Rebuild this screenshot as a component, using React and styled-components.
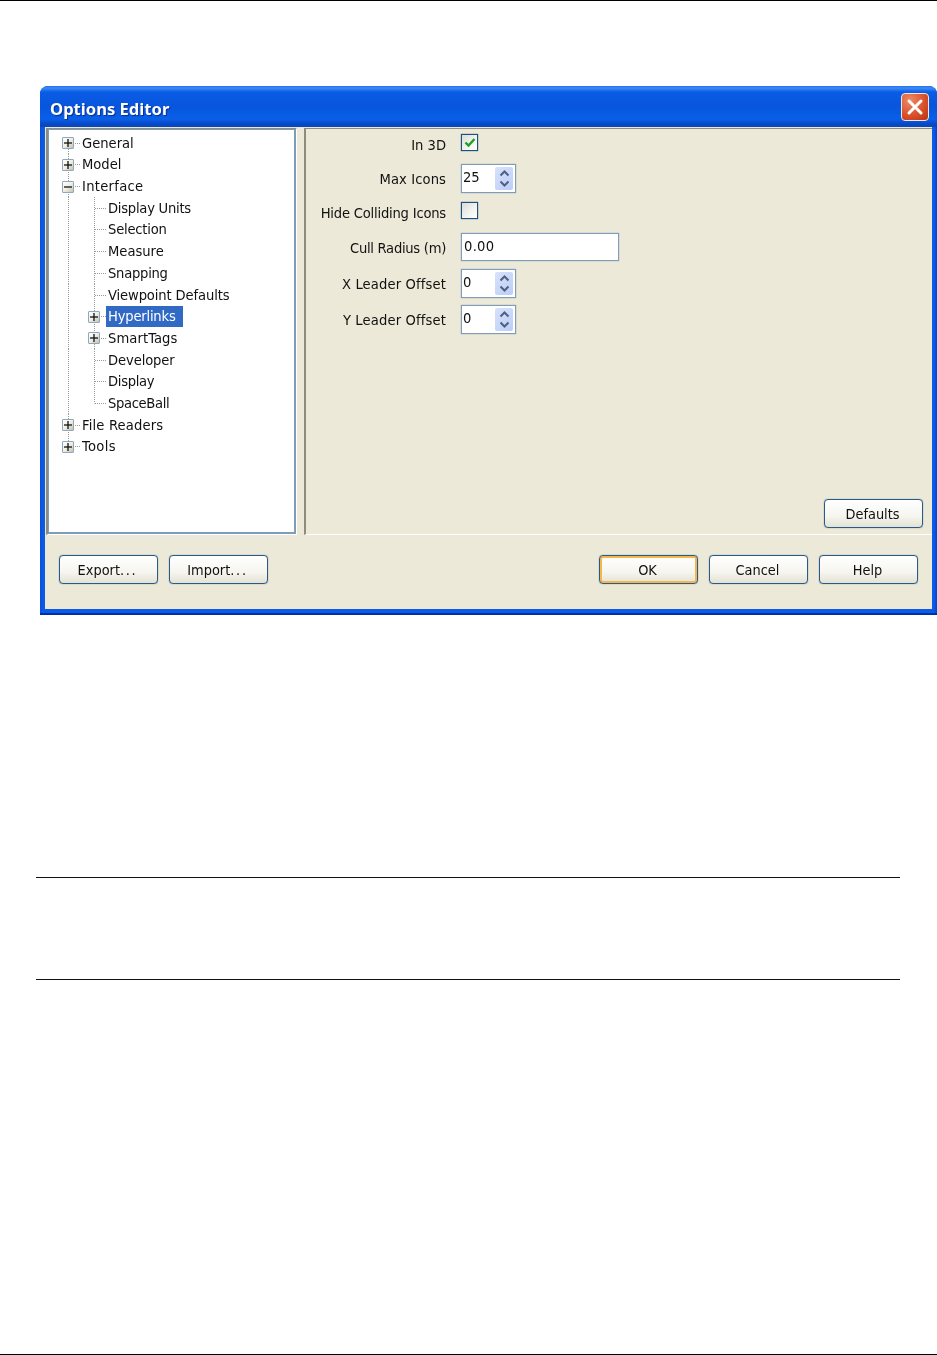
import React from "react";
import styled, { createGlobalStyle } from "styled-components";

const Global = createGlobalStyle`
  html, body { margin: 0; padding: 0; background: #fff; }
  body { width: 937px; height: 1355px; overflow: hidden; font-family: "DejaVu Sans Condensed", "DejaVu Sans", sans-serif; color: #111; }
`;

const Page = styled.div`
  width: 937px;
  height: 1355px;
  display: flex;
  flex-direction: column;
  box-sizing: border-box;
  border-top: 1px solid #000;
  border-bottom: 1px solid #000;
  overflow: hidden;
`;

const Dialog = styled.section`
  margin: 85px 0 0 40px;
  width: 897px;
  height: 529px;
  box-sizing: border-box;
  display: flex;
  flex-direction: column;
  flex: none;
  padding: 0 5px 6px 5px;
  border-radius: 8px 8px 0 0;
  background: linear-gradient(to right, #0a4fd8 0, #0a5be8 3px, #0a5be8 calc(100% - 3px), #0843c4 100%);
  box-shadow: inset 0 -2px 0 #0030a8;
  filter: blur(0.35px);
`;

const TitleBar = styled.header`
  height: 41px;
  margin: 0 -5px;
  padding: 0 8px 0 10px;
  flex: none;
  display: flex;
  align-items: center;
  justify-content: space-between;
  border-radius: 8px 8px 0 0;
  background: linear-gradient(to bottom, #1f6fee 0, #3f8cf6 2px, #0a5ce6 6px, #0855dd 20px, #0a5fe8 33px, #0649c8 38px, #0a45c0 41px);
`;

const Title = styled.h1`
  margin: 3px 0 0;
  font-family: "Noto Sans", sans-serif;
  font-size: 16.6px;
  font-weight: 700;
  color: #fff;
  text-shadow: 1px 1px 1px #0a2f8f;
`;

const CloseButton = styled.button`
  width: 28px;
  height: 28px;
  padding: 0;
  display: flex;
  align-items: center;
  justify-content: center;
  border: 1px solid #f4e6e0;
  border-radius: 4px;
  background: radial-gradient(circle at 30% 25%, #ee8a68 0, #d9522b 55%, #b8300f 100%);
`;

const Body = styled.div`
  flex: 1;
  display: flex;
  flex-direction: column;
  background: #ece9d8;
`;

const Split = styled.div`
  height: 408px;
  display: flex;
  flex: none;
`;

const TreePane = styled.div`
  width: 251px;
  box-sizing: border-box;
  margin-top: 1px;
  margin-left: 1px;
  border-left: 2px solid #8e8c7e;
  border-top: 1px solid #8e8c7e;
  border-right: 1px solid #fff;
  border-bottom: 1px solid #fff;
  background: #ece9d8;
  display: flex;
`;

const Tree = styled.ul`
  list-style: none;
  margin: 0;
  flex: 1;
  padding: 2.4px 0 0 6px;
  background: #fff;
  border: 1px solid #7f9db9;
  border-width: 1px 2px 2px 1px;
`;

const TreeRow = styled.li`
  height: 21.7px;
  display: flex;
  align-items: center;
  font-size: 14.6px;
`;

const dot = "repeating-linear-gradient(%DIR%, #9a9a9a 0 1px, transparent 1px 2px)";
const vert = dot.replace("%DIR%", "to bottom");
const horiz = dot.replace("%DIR%", "to right");

const backgrounds = {
  through: [`${vert} 13px 0 / 1px 100% no-repeat`],
  tee: [`${vert} 13px 0 / 1px 100% no-repeat`, `${horiz} 14px 50% / 12px 1px no-repeat`],
  end: [`${vert} 13px 0 / 1px 50% no-repeat`, `${horiz} 14px 50% / 12px 1px no-repeat`],
  start: [`${vert} 13px 100% / 1px 50% no-repeat`, `${horiz} 14px 50% / 12px 1px no-repeat`],
};

const Gutter = styled.span`
  width: 26px;
  height: 100%;
  flex: none;
  display: flex;
  align-items: center;
  background: ${(p) => backgrounds[p.$line].join(", ")};
`;

const Expander = styled.span`
  width: 12px;
  height: 12px;
  margin-left: 7px;
  box-sizing: border-box;
  display: flex;
  align-items: center;
  justify-content: center;
  border: 1px solid #8fa8c0;
  border-radius: 1px;
  background: linear-gradient(135deg, #fff 0, #eeeee4 50%, #c4c2b0 100%);
`;

const TreeLabel = styled.span`
  margin-left: -1px;
  height: 21px;
  line-height: 20px;
  white-space: nowrap;
  letter-spacing: ${(p) => p.$track || 0}px;
  color: ${(p) => (p.$selected ? "#fff" : "#111")};
  background: ${(p) => (p.$selected ? "#316ac5" : "transparent")};
  padding: 0 ${(p) => (p.$selected ? "7px" : "2px")} 0 2px;
`;

const OptionsPane = styled.div`
  margin-left: 7px;
  margin-top: 1px;
  flex: 1;
  display: flex;
  flex-direction: column;
  box-sizing: border-box;
  border-left: 2px solid #8e8c7e;
  border-top: 1px solid #8e8c7e;
  border-bottom: 1px solid #fff;
  padding: 0 9px 6px 0;
`;

const Form = styled.div`
  flex: 1;
  display: flex;
  flex-direction: column;
`;

const Row = styled.div`
  display: flex;
  align-items: center;
  gap: 15px;
  height: ${(p) => p.$h}px;
  margin-top: ${(p) => p.$gap}px;
`;

const FieldLabel = styled.label`
  width: 140px;
  flex: none;
  text-align: right;
  font-size: 14.6px;
  white-space: nowrap;
  direction: rtl;
  letter-spacing: ${(p) => p.$track || 0}px;
  padding-top: ${(p) => p.$drop || 0}px;
`;

const CheckBox = styled.span`
  width: 17px;
  height: 17px;
  box-sizing: border-box;
  display: flex;
  align-items: center;
  justify-content: center;
  border: 1px solid #1c5180;
  box-shadow: 0 0 1px #1c5180;
  background: linear-gradient(135deg, #dcdcd7 0, #f4f4f0 60%, #fff 100%);
`;

const Spinner = styled.div`
  width: 55px;
  height: 29px;
  box-sizing: border-box;
  display: flex;
  align-items: stretch;
  padding: 2px;
  border: 1px solid #7f9db9;
  box-shadow: 0 0 1px #7f9db9;
  background: #fff;
`;

const SpinValue = styled.span`
  flex: 1;
  font-size: 14.6px;
  line-height: 20px;
  margin-left: -1px;
`;

const SpinButtons = styled.span`
  width: 18px;
  display: flex;
  flex-direction: column;
  justify-content: space-around;
  align-items: center;
  border-radius: 2px;
  background: linear-gradient(135deg, #d8e2fa 0, #bccdf6 100%);
  padding: 2px 0;
`;

const TextInput = styled.div`
  width: 158px;
  height: 28px;
  box-sizing: border-box;
  border: 1px solid #7f9db9;
  box-shadow: 0 0 1px #7f9db9;
  background: #fff;
  font-size: 14.6px;
  line-height: 23px;
  padding-left: 2px;
  letter-spacing: 0.3px;
`;

const DefaultsRow = styled.div`
  display: flex;
  justify-content: flex-end;
`;

const Button = styled.button`
  width: 99px;
  height: 29px;
  padding: 0 2px 0 0;
  box-sizing: border-box;
  font-family: inherit;
  font-size: 14.4px;
  color: #111;
  border: 1px solid #2c5a86;
  border-radius: 4px;
  background: linear-gradient(to bottom, #fff 0, #f6f5ef 60%, #e4e2d4 100%);
  box-shadow: 0 0 1px #2c5a86${(p) => (p.$default ? ", inset 0 0 0 2px #f5b64a" : "")};
`;

const Dots = styled.span`
  letter-spacing: 1.7px;
`;

const Footer = styled.div`
  flex: 1;
  display: flex;
  align-items: flex-start;
  justify-content: space-between;
  padding: 20px 14px 0 14px;
`;

const ButtonGroup = styled.div`
  display: flex;
  gap: 11px;
`;

const RuledNote = styled.div`
  margin: 262px 37px 0 36px;
  height: 101px;
  flex: none;
  border-top: 1px solid #111;
  border-bottom: 1px solid #111;
`;

const Plus = ({ minus }) => (
  <svg width="8" height="8" viewBox="0 0 8 8" aria-hidden="true">
    <path d="M0 4H8" stroke="#111" strokeWidth="1.3" />
    {!minus && <path d="M4 0V8" stroke="#111" strokeWidth="1.3" />}
  </svg>
);

const Arrow = ({ up }) => (
  <svg width="11" height="7" viewBox="0 0 11 7" aria-hidden="true">
    <path d={up ? "M1.5 5.5L5.5 1.5L9.5 5.5" : "M1.5 1.5L5.5 5.5L9.5 1.5"} fill="none" stroke="#4d6185" strokeWidth="2" />
  </svg>
);

const Spin = ({ value }) => (
  <Spinner>
    <SpinValue>{value}</SpinValue>
    <SpinButtons>
      <Arrow up />
      <Arrow />
    </SpinButtons>
  </Spinner>
);

const tree = [
  { g: [["start", true]], t: "General" },
  { g: [["tee", true]], t: "Model" },
  { g: [["tee", true, true]], t: "Interface", k: 0.3 },
  { g: [["through"], ["tee"]], t: "Display Units", k: -0.25 },
  { g: [["through"], ["tee"]], t: "Selection", k: -0.2 },
  { g: [["through"], ["tee"]], t: "Measure" },
  { g: [["through"], ["tee"]], t: "Snapping", k: -0.25 },
  { g: [["through"], ["tee"]], t: "Viewpoint Defaults", k: -0.12 },
  { g: [["through"], ["tee", true]], t: "Hyperlinks", k: -0.2, sel: true },
  { g: [["through"], ["tee", true]], t: "SmartTags", k: 0.1 },
  { g: [["through"], ["tee"]], t: "Developer", k: -0.1 },
  { g: [["through"], ["tee"]], t: "Display", k: -0.3 },
  { g: [["through"], ["end"]], t: "SpaceBall", k: -0.33 },
  { g: [["tee", true]], t: "File Readers", k: 0.17 },
  { g: [["end", true]], t: "Tools", k: 0.4 },
];

export default function App() {
  return (
    <>
      <Global />
      <Page>
        <Dialog>
          <TitleBar>
            <Title>Options Editor</Title>
            <CloseButton aria-label="Close">
              <svg width="18" height="18" viewBox="0 0 18 18" aria-hidden="true">
                <path d="M3 3L15 15M15 3L3 15" stroke="#fff" strokeWidth="3" strokeLinecap="round" />
              </svg>
            </CloseButton>
          </TitleBar>
          <Body>
            <Split>
              <TreePane>
                <Tree>
                  {tree.map((r) => (
                    <TreeRow key={r.t}>
                      {r.g.map(([line, box, minus], i) => (
                        <Gutter key={i} $line={line}>
                          {box && (
                            <Expander>
                              <Plus minus={minus} />
                            </Expander>
                          )}
                        </Gutter>
                      ))}
                      <TreeLabel $selected={r.sel} $track={r.k}>{r.t}</TreeLabel>
                    </TreeRow>
                  ))}
                </Tree>
              </TreePane>
              <OptionsPane>
                <Form>
                  <Row $h={28} $gap={-1}>
                    <FieldLabel $drop={4}>In 3D</FieldLabel>
                    <CheckBox>
                      <svg width="12" height="11" viewBox="0 0 12 11" aria-hidden="true">
                        <path d="M1.5 5.5L4.5 8.5L10.5 2" fill="none" stroke="#21a121" strokeWidth="2.4" />
                      </svg>
                    </CheckBox>
                  </Row>
                  <Row $h={29} $gap={8}>
                    <FieldLabel $track={0.1}>Max Icons</FieldLabel>
                    <Spin value="25" />
                  </Row>
                  <Row $h={28} $gap={3}>
                    <FieldLabel $drop={4} $track={-0.2}>Hide Colliding Icons</FieldLabel>
                    <CheckBox />
                  </Row>
                  <Row $h={28} $gap={9}>
                    <FieldLabel $track={-0.28}>Cull Radius (m)</FieldLabel>
                    <TextInput>0.00</TextInput>
                  </Row>
                  <Row $h={29} $gap={8}>
                    <FieldLabel $track={0.14}>X Leader Offset</FieldLabel>
                    <Spin value="0" />
                  </Row>
                  <Row $h={29} $gap={7}>
                    <FieldLabel $track={0.14}>Y Leader Offset</FieldLabel>
                    <Spin value="0" />
                  </Row>
                </Form>
                <DefaultsRow>
                  <Button>Defaults</Button>
                </DefaultsRow>
              </OptionsPane>
            </Split>
            <Footer>
              <ButtonGroup>
                <Button>Export<Dots>...</Dots></Button>
                <Button>Import<Dots>...</Dots></Button>
              </ButtonGroup>
              <ButtonGroup>
                <Button $default>OK</Button>
                <Button>Cancel</Button>
                <Button>Help</Button>
              </ButtonGroup>
            </Footer>
          </Body>
        </Dialog>
        <RuledNote />
      </Page>
    </>
  );
}
